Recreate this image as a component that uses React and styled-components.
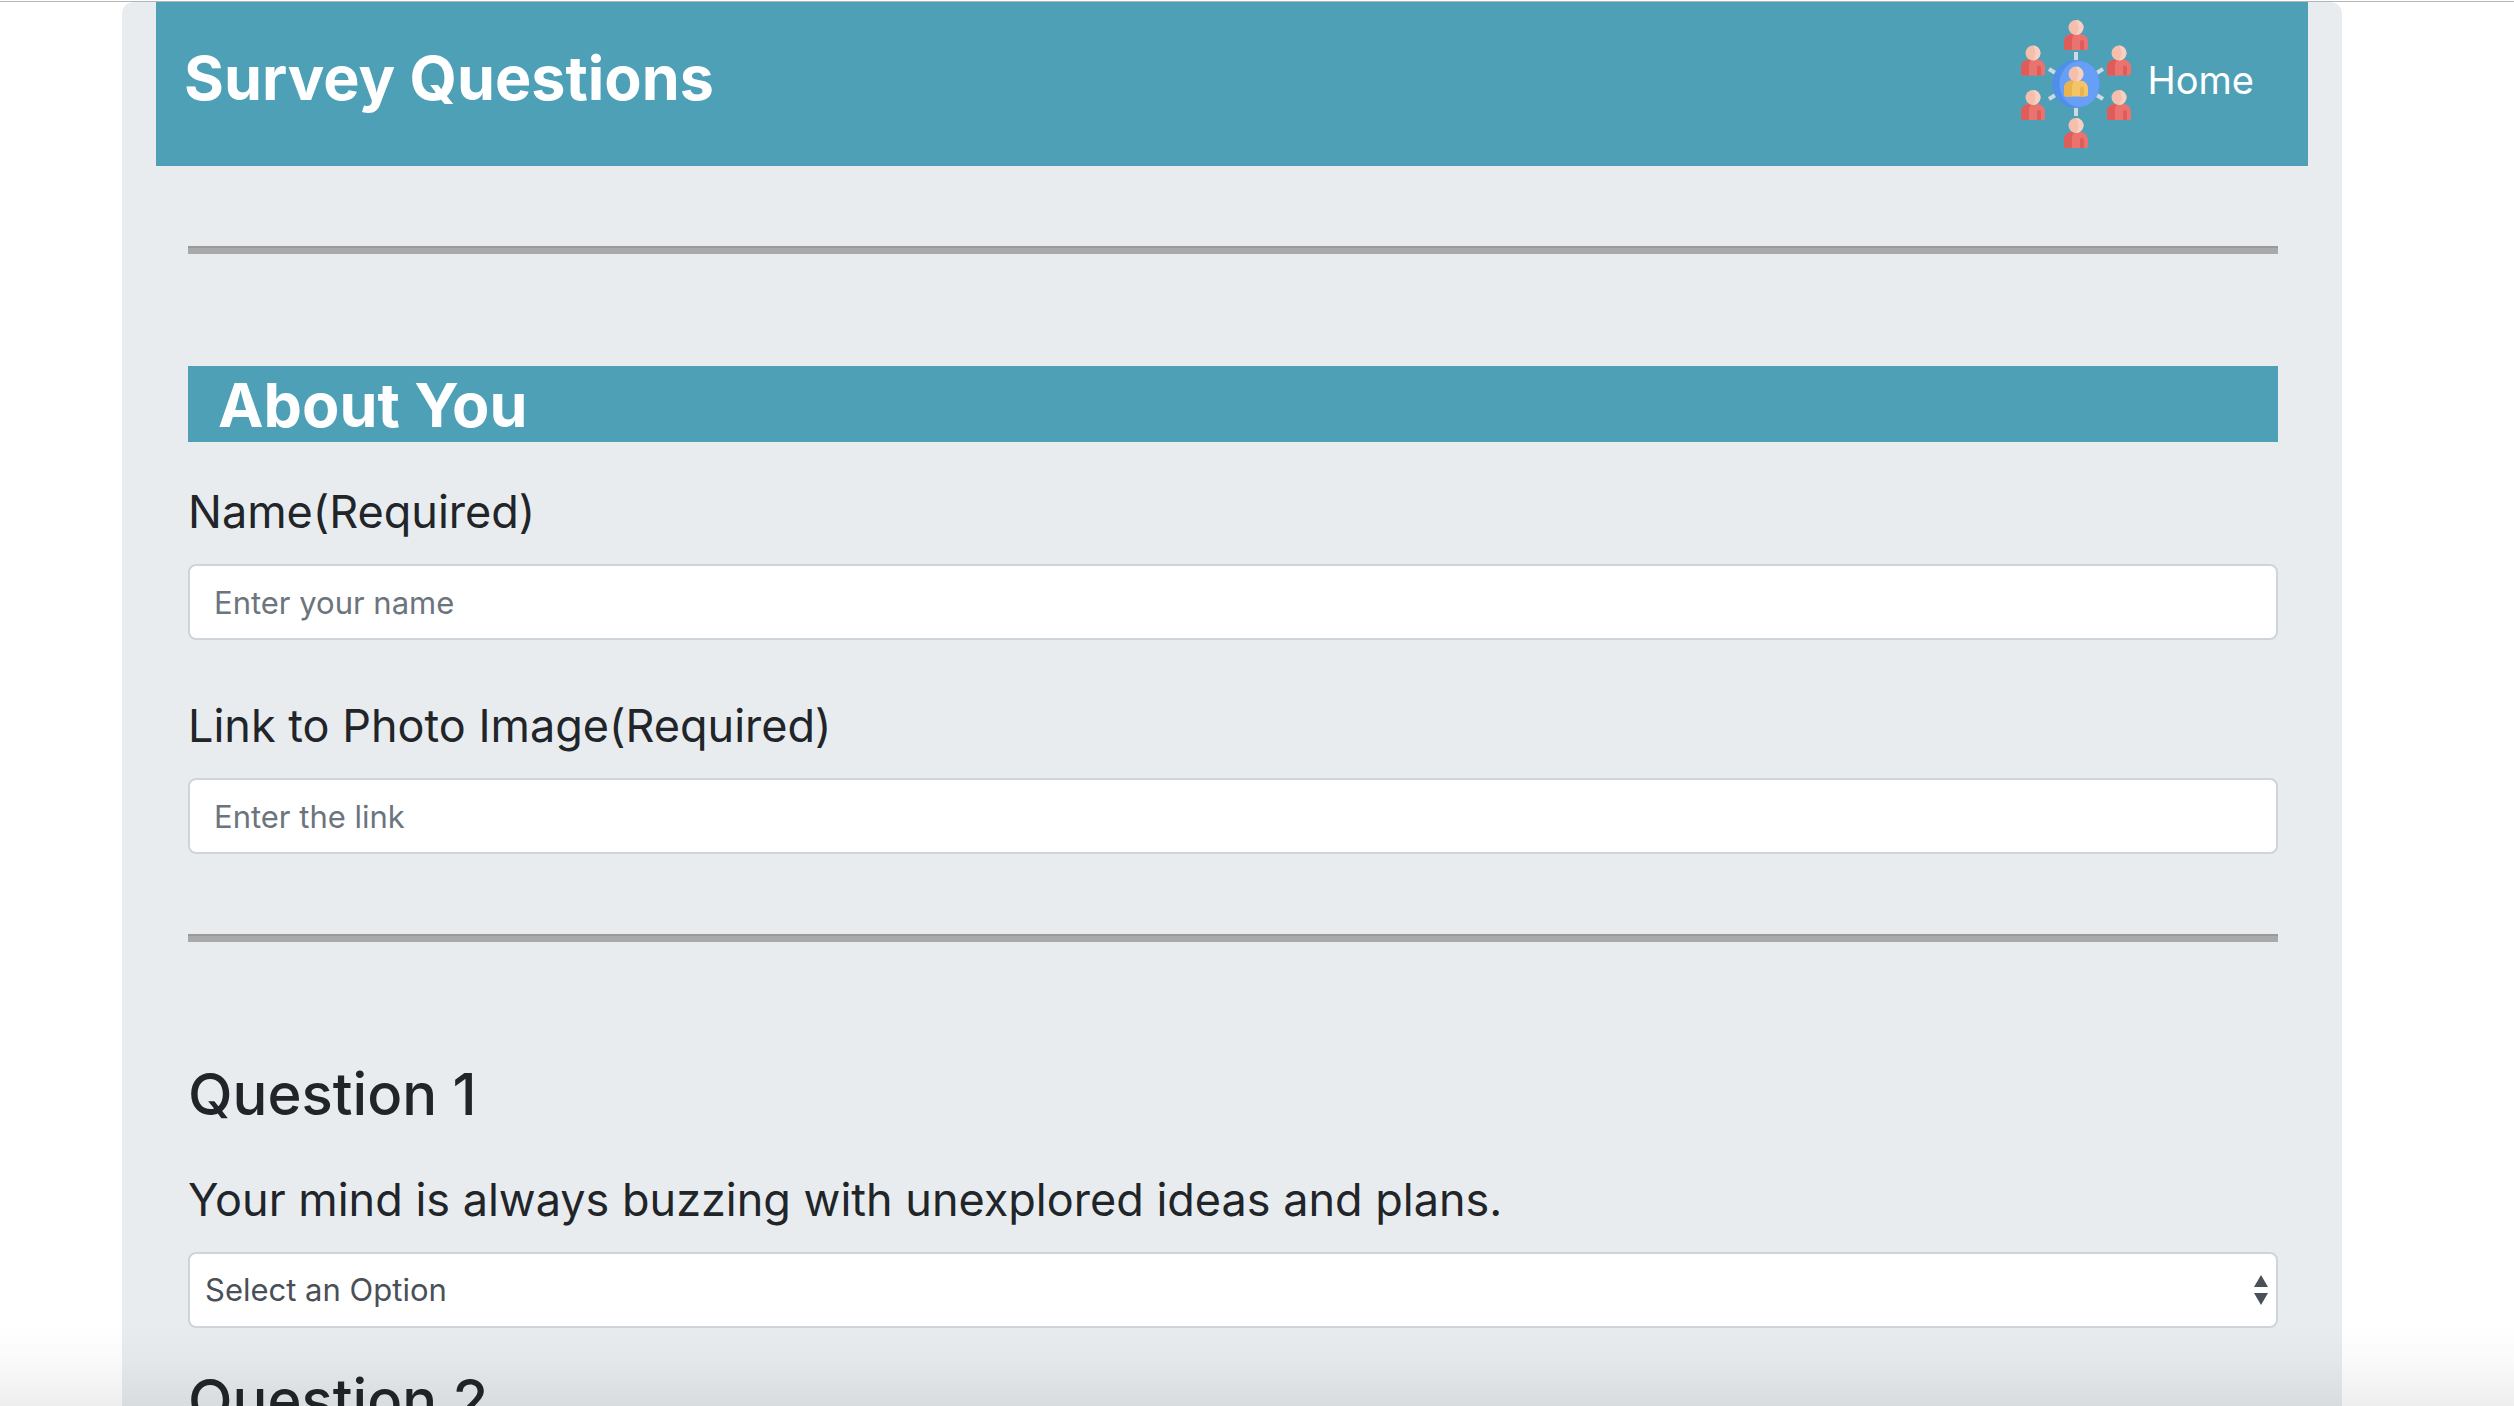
import React, { useId } from "react";
import styled, { createGlobalStyle } from "styled-components";

const GlobalStyle = createGlobalStyle`
  *, *::before, *::after { box-sizing: border-box; }
  html, body { margin: 0; height: 100%; overflow: hidden; background: #fff; }
  #root { height: 100%; }
  body {
    font-family: Inter, "Liberation Sans", sans-serif;
    font-size: 31px;
    line-height: 48px;
    color: #212529;
  }
`;

const Viewport = styled.div`
  position: relative;
  height: 100%;
  overflow: hidden;
  padding: 1px 172px 0 122px;
  &::before {
    content: "";
    position: absolute;
    top: 1px;
    left: 0;
    right: 0;
    height: 1px;
    background: #b5b5b5;
  }
`;

const BottomShade = styled.div`
  position: absolute;
  left: 0;
  right: 0;
  bottom: 0;
  height: 84px;
  pointer-events: none;
  background: linear-gradient(rgba(0, 0, 0, 0), rgba(0, 0, 0, 0.018) 45%, rgba(0, 0, 0, 0.065));
`;

const Panel = styled.main`
  margin-top: 1px;
  min-height: 100%;
  padding-bottom: 64px;
  background: #e8ecef;
  border-radius: 12px 12px 0 0;
`;

const Header = styled.header`
  display: flex;
  align-items: flex-start;
  justify-content: space-between;
  height: 164px;
  margin: 0 34px;
  padding: 18px 54px 0 28px;
  background: #4ea0b7;
  color: #fff;
`;

const Title = styled.h1`
  margin: 20px 0 0;
  font-size: 61px;
  line-height: 76px;
  font-weight: 700;
`;

const HomeLink = styled.a`
  display: flex;
  align-items: center;
  gap: 8px;
  color: #fff;
  font-size: 38px;
  line-height: 60px;
  text-decoration: none;
  svg { display: block; width: 128px; height: 128px; }
`;

const HomeText = styled.span`
  padding-bottom: 8px;
`;

const Form = styled.form`
  padding: 0 64px 0 66px;
`;

const Divider = styled.hr`
  height: 8px;
  margin: 80px 0;
  border: 0;
  border-top: 2px solid #999;
  background: #a9a9a9;
`;

const SectionTitle = styled.h2`
  margin: 112px 0 0;
  padding: 4px 30px 0;
  height: 76px;
  background: #4ea0b7;
  color: #fff;
  font-size: 61px;
  line-height: 70px;
  font-weight: 700;
`;

const QuestionTitle = styled.h2`
  margin: 0 0 36px;
  font-size: 58px;
  line-height: 80px;
  font-weight: 500;
`;

const Label = styled.label`
  display: block;
  margin-bottom: 22px;
  font-size: 45px;
  line-height: 60px;
`;

const Field = styled.div`
  margin-top: ${(p) => p.$gap}px;
`;

const Questions = styled.section`
  padding-top: 32px;
`;

const Question = styled.section`
  display: flow-root;
  margin-bottom: 32px;
`;

const Input = styled.input`
  display: block;
  width: 100%;
  height: 76px;
  padding: 12px 24px;
  border: 2px solid #ced4da;
  border-radius: 8px;
  background: #fff;
  color: #495057;
  font: inherit;
  outline: none;
  &::placeholder { color: #6c757d; opacity: 1; }
`;

const SelectWrap = styled.div`
  position: relative;
  svg {
    position: absolute;
    top: 23px;
    right: 10px;
    width: 14px;
    height: 30px;
    pointer-events: none;
  }
`;

const Select = styled.select`
  display: block;
  width: 100%;
  height: 76px;
  padding: 0 56px 0 15px;
  border: 2px solid #ced4da;
  border-radius: 8px;
  background: #fff;
  color: #495057;
  font: inherit;
  appearance: none;
  outline: none;
`;

function Person({ x, y, main = "#eb736f", dark = "#de5d5a" }) {
  return (
    <g transform={`translate(${x} ${y})`}>
      <path d="M-12 30V21.500C-12 17-8 14-4 14H4C8 14 12 17 12 21.500V28Q12 30 10 30H-10Q-12 30-12 28Z" fill={main} />
      <path d="M-12 28V21.500C-12 17-8 14-4 14H-1Q-4 16-4 21V30H-10Q-12 30-12 28Z" fill={dark} />
      <path d="M4 21.500Q4 20 6 20T8 21.500V30H4Z" fill={dark} />
      <circle cy="7.500" r="7.500" fill="#f5bfae" />
      <path d="M0 0A7.500 7.500 0 0 1 0 15Q5 7.500 0 0Z" fill="#f8d0c3" />
    </g>
  );
}

function NetworkIcon() {
  return (
    <svg viewBox="0 0 128 128" aria-hidden="true">
      <path
        d="M64 32V41M64 87V96M37 49L45 54M83 74L91 79M37 79L45 74M83 54L91 49"
        stroke="#cdd9e6"
        strokeWidth="4"
      />
      <circle cx="64" cy="64" r="24" fill="#4f8fea" />
      <ellipse cx="67.500" cy="64" rx="20" ry="23" fill="#669ff5" />
      <Person x={64} y={0} />
      <Person x={107} y={25.5} />
      <Person x={107} y={70} />
      <Person x={64} y={98} />
      <Person x={21} y={25.5} />
      <Person x={21} y={70} />
      <Person x={64} y={46.500} main="#f3c567" dark="#e9b450" />
    </svg>
  );
}

function TextField({ label, placeholder, gap }) {
  const id = useId();
  return (
    <Field $gap={gap}>
      <Label htmlFor={id}>{label}</Label>
      <Input id={id} type="text" placeholder={placeholder} />
    </Field>
  );
}

function SelectField({ label }) {
  const id = useId();
  return (
    <Field $gap={0}>
      <Label htmlFor={id}>{label}</Label>
      <SelectWrap>
        <Select id={id}>
          <option>Select an Option</option>
        </Select>
        <svg viewBox="0 0 14 30" aria-hidden="true">
          <path d="M7 0L14 12H0ZM0 18H14L7 30Z" fill="#495057" />
        </svg>
      </SelectWrap>
    </Field>
  );
}

export default function App() {
  return (
    <Viewport>
      <GlobalStyle />
      <Panel>
        <Header>
          <Title>Survey Questions</Title>
          <HomeLink href="#home">
            <NetworkIcon />
            <HomeText>Home</HomeText>
          </HomeLink>
        </Header>
        <Form>
          <Divider />
          <SectionTitle>About You</SectionTitle>
          <TextField label="Name(Required)" placeholder="Enter your name" gap={40} />
          <TextField label="Link to Photo Image(Required)" placeholder="Enter the link" gap={56} />
          <Divider />
          <Questions>
            <Question>
              <QuestionTitle>Question 1</QuestionTitle>
              <SelectField label="Your mind is always buzzing with unexplored ideas and plans." />
            </Question>
            <Question>
              <QuestionTitle>Question 2</QuestionTitle>
            </Question>
          </Questions>
        </Form>
      </Panel>
      <BottomShade />
    </Viewport>
  );
}
